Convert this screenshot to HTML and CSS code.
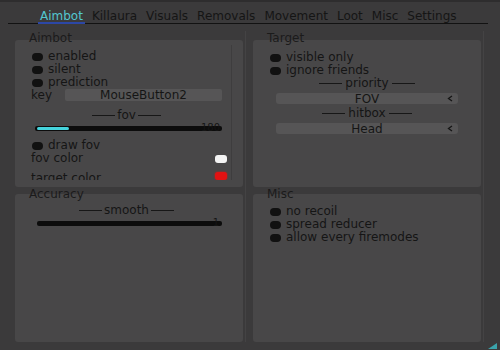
FILE: index.html
```html
<!DOCTYPE html>
<html lang="en">
<head>
    <meta charset="UTF-8">
    <meta name="viewport" content="width=device-width, initial-scale=1.0">
    <title>Menu - Aimbot</title>
    <link rel="stylesheet" href="styles.css">
</head>
<body>
    <div class="window">
        <nav class="tabs">
            <span class="tab active">Aimbot</span>
            <span class="tab">Killaura</span>
            <span class="tab">Visuals</span>
            <span class="tab">Removals</span>
            <span class="tab">Movement</span>
            <span class="tab">Loot</span>
            <span class="tab">Misc</span>
            <span class="tab">Settings</span>
        </nav>

        <div class="columns">
            <div class="column">
                <div class="group-label">Aimbot</div>
                <div class="group group-top group-scroll">
                    <div class="scroll">
                        <div class="check-row"><span class="check"></span>enabled</div>
                        <div class="check-row"><span class="check"></span>silent</div>
                        <div class="check-row"><span class="check"></span>prediction</div>
                        <div class="key-row">
                            <span class="key-label">key</span>
                            <span class="button">MouseButton2</span>
                        </div>
                        <div class="separator"><span class="line"></span>fov<span class="line"></span></div>
                        <div class="slider">
                            <span class="slider-value">180</span>
                            <div class="track"><div class="fill" style="width: 17.5%"></div></div>
                        </div>
                        <div class="check-row row-gap"><span class="check"></span>draw fov</div>
                        <div class="color-row">fov color<span class="swatch swatch-white"></span></div>
                        <div class="color-row color-row-next">target color<span class="swatch swatch-red"></span></div>
                    </div>
                </div>

                <div class="group-label group-label-low">Accuracy</div>
                <div class="group group-bottom group-accuracy">
                    <div class="separator separator-first"><span class="line"></span>smooth<span class="line"></span></div>
                    <div class="slider">
                        <span class="slider-value slider-value-small">1</span>
                        <div class="track track-wide"></div>
                    </div>
                </div>
            </div>

            <div class="column">
                <div class="group-label">Target</div>
                <div class="group group-top group-side">
                    <div class="check-row"><span class="check"></span>visible only</div>
                    <div class="check-row"><span class="check"></span>ignore friends</div>
                    <div class="separator separator-small"><span class="line"></span>priority<span class="line"></span></div>
                    <div class="combo">
                        <span class="combo-pad"></span>
                        <span class="combo-text">FOV</span>
                        <svg class="combo-arrow" width="6" height="7" viewBox="0 0 6 7"><polyline points="5,1 1.5,3.5 5,6" fill="none" stroke="#151515" stroke-width="1.3"/></svg>
                    </div>
                    <div class="separator separator-small separator-tight"><span class="line"></span>hitbox<span class="line"></span></div>
                    <div class="combo">
                        <span class="combo-pad"></span>
                        <span class="combo-text">Head</span>
                        <svg class="combo-arrow" width="6" height="7" viewBox="0 0 6 7"><polyline points="5,1 1.5,3.5 5,6" fill="none" stroke="#151515" stroke-width="1.3"/></svg>
                    </div>
                </div>

                <div class="group-label group-label-low">Misc</div>
                <div class="group group-bottom group-side">
                    <div class="check-row"><span class="check"></span>no recoil</div>
                    <div class="check-row"><span class="check"></span>spread reducer</div>
                    <div class="check-row"><span class="check"></span>allow every firemodes</div>
                </div>
            </div>
        </div>

        <div class="grip"></div>
    </div>
</body>
</html>
```

FILE: styles.css
```css
body {
    margin: 0;
    background-color: #3b3a3b;
    font-family: "DejaVu Sans", Verdana, sans-serif;
    font-size: 12px;
    color: #151515;
}
.window {
    position: relative;
    height: 350px;
    box-sizing: border-box;
    border-top: 2px solid #2e2d2e;
    overflow: hidden;
}

/* tab bar */
.tabs {
    display: flex;
    gap: 5px;
    height: 13px;
    margin: 0 12px 0 8px;
    padding: 8px 0 0 30px;
    line-height: 13px;
    border-bottom: 1px solid #121212;
}
.tab {
    position: relative;
    padding: 0 2px;
    white-space: nowrap;
}
.tab.active {
    color: #53c7d0;
}
.tab.active::after {
    content: "";
    position: absolute;
    left: 0;
    right: 0;
    bottom: -1px;
    height: 2px;
    background: #2c47a6;
}

/* columns and groups */
.columns {
    display: grid;
    grid-template-columns: 231px 231px;
    column-gap: 7px;
    margin: 7px 0 0 15px;
}
.column {
    padding-right: 2px;
    border-right: 1px solid #444344;
}
.group-label {
    height: 9px;
    line-height: 14px;
    padding-left: 14px;
    color: #1b1b1b;
}
.group-label-low {
    height: 7px;
}
.group {
    background: #484748;
    border-radius: 3px;
    box-sizing: border-box;
}
.group-top {
    height: 147px;
}
.group-bottom {
    height: 148px;
}
.group-scroll {
    padding-top: 5px;
}
.scroll {
    height: 130px;
    overflow: hidden;
    margin-right: 11px;
    padding: 5px 9px 0 16px;
    border-right: 1px solid #3e3d3e;
}
.group-accuracy {
    padding: 10px 21px 0 16px;
}
.group-side {
    padding: 11px 16px 0 16px;
}

/* rows */
.check-row {
    display: flex;
    align-items: center;
    height: 13px;
    line-height: 13px;
    white-space: nowrap;
}
.row-gap {
    margin-top: 4px;
}
.check {
    width: 11px;
    height: 8px;
    margin: 0 5px 0 1px;
    border-radius: 4px;
    background: #111;
}
.key-row {
    display: flex;
    height: 12px;
    line-height: 12px;
}
.key-label {
    width: 34px;
}
.button {
    flex: 1;
    background: #565556;
    border-radius: 2px;
    text-align: center;
}
.separator {
    display: flex;
    justify-content: center;
    align-items: center;
    gap: 2px;
    margin-top: 8px;
    height: 13px;
    line-height: 13px;
}
.separator-first {
    margin-top: 0;
}
.separator-small {
    margin-top: 0;
    height: 12px;
    line-height: 12px;
    gap: 3px;
}
.separator-tight {
    margin-top: 3px;
}
.line {
    width: 23px;
    height: 1px;
    background: #171717;
}
.slider {
    position: relative;
    height: 9px;
}
.slider-value {
    position: absolute;
    right: 2px;
    top: -3px;
    font-size: 10px;
    line-height: 10px;
}
.slider-value-small {
    right: 3px;
}
.track {
    height: 5px;
    margin: 4px 0 0 4px;
    padding: 1px 2px;
    box-sizing: border-box;
    border-radius: 2px;
    background: #0c0c0c;
}
.track-wide {
    margin-left: 6px;
}
.fill {
    height: 3px;
    border-radius: 2px;
    background: #45d3dc;
}
.color-row {
    display: flex;
    align-items: center;
    justify-content: space-between;
    height: 13px;
    line-height: 13px;
}
.color-row-next {
    margin-top: 7px;
}
.swatch {
    width: 12px;
    height: 8px;
    margin-right: -5px;
    border-radius: 3px;
}
.color-row-next .swatch {
    align-self: flex-start;
}
.swatch-white {
    background: #f4f4f4;
}
.swatch-red {
    background: #e21212;
    box-shadow: 0 0 2px #e21212;
}

/* combo boxes */
.combo {
    display: flex;
    align-items: center;
    height: 11px;
    line-height: 12px;
    margin: 4px 7px 0;
    background: #565556;
    border-radius: 3px;
}
.combo + .separator {
    margin-top: 3px;
}
.combo-pad {
    width: 11px;
}
.combo-text {
    flex: 1;
    text-align: center;
}
.combo-arrow {
    margin: 0 5px 0 0;
}

/* resize grip */
.grip {
    position: absolute;
    right: 3px;
    bottom: 1px;
    width: 9px;
    height: 6px;
    background: #3aa3ab;
    clip-path: polygon(100% 0, 100% 100%, 0 100%);
}
```
